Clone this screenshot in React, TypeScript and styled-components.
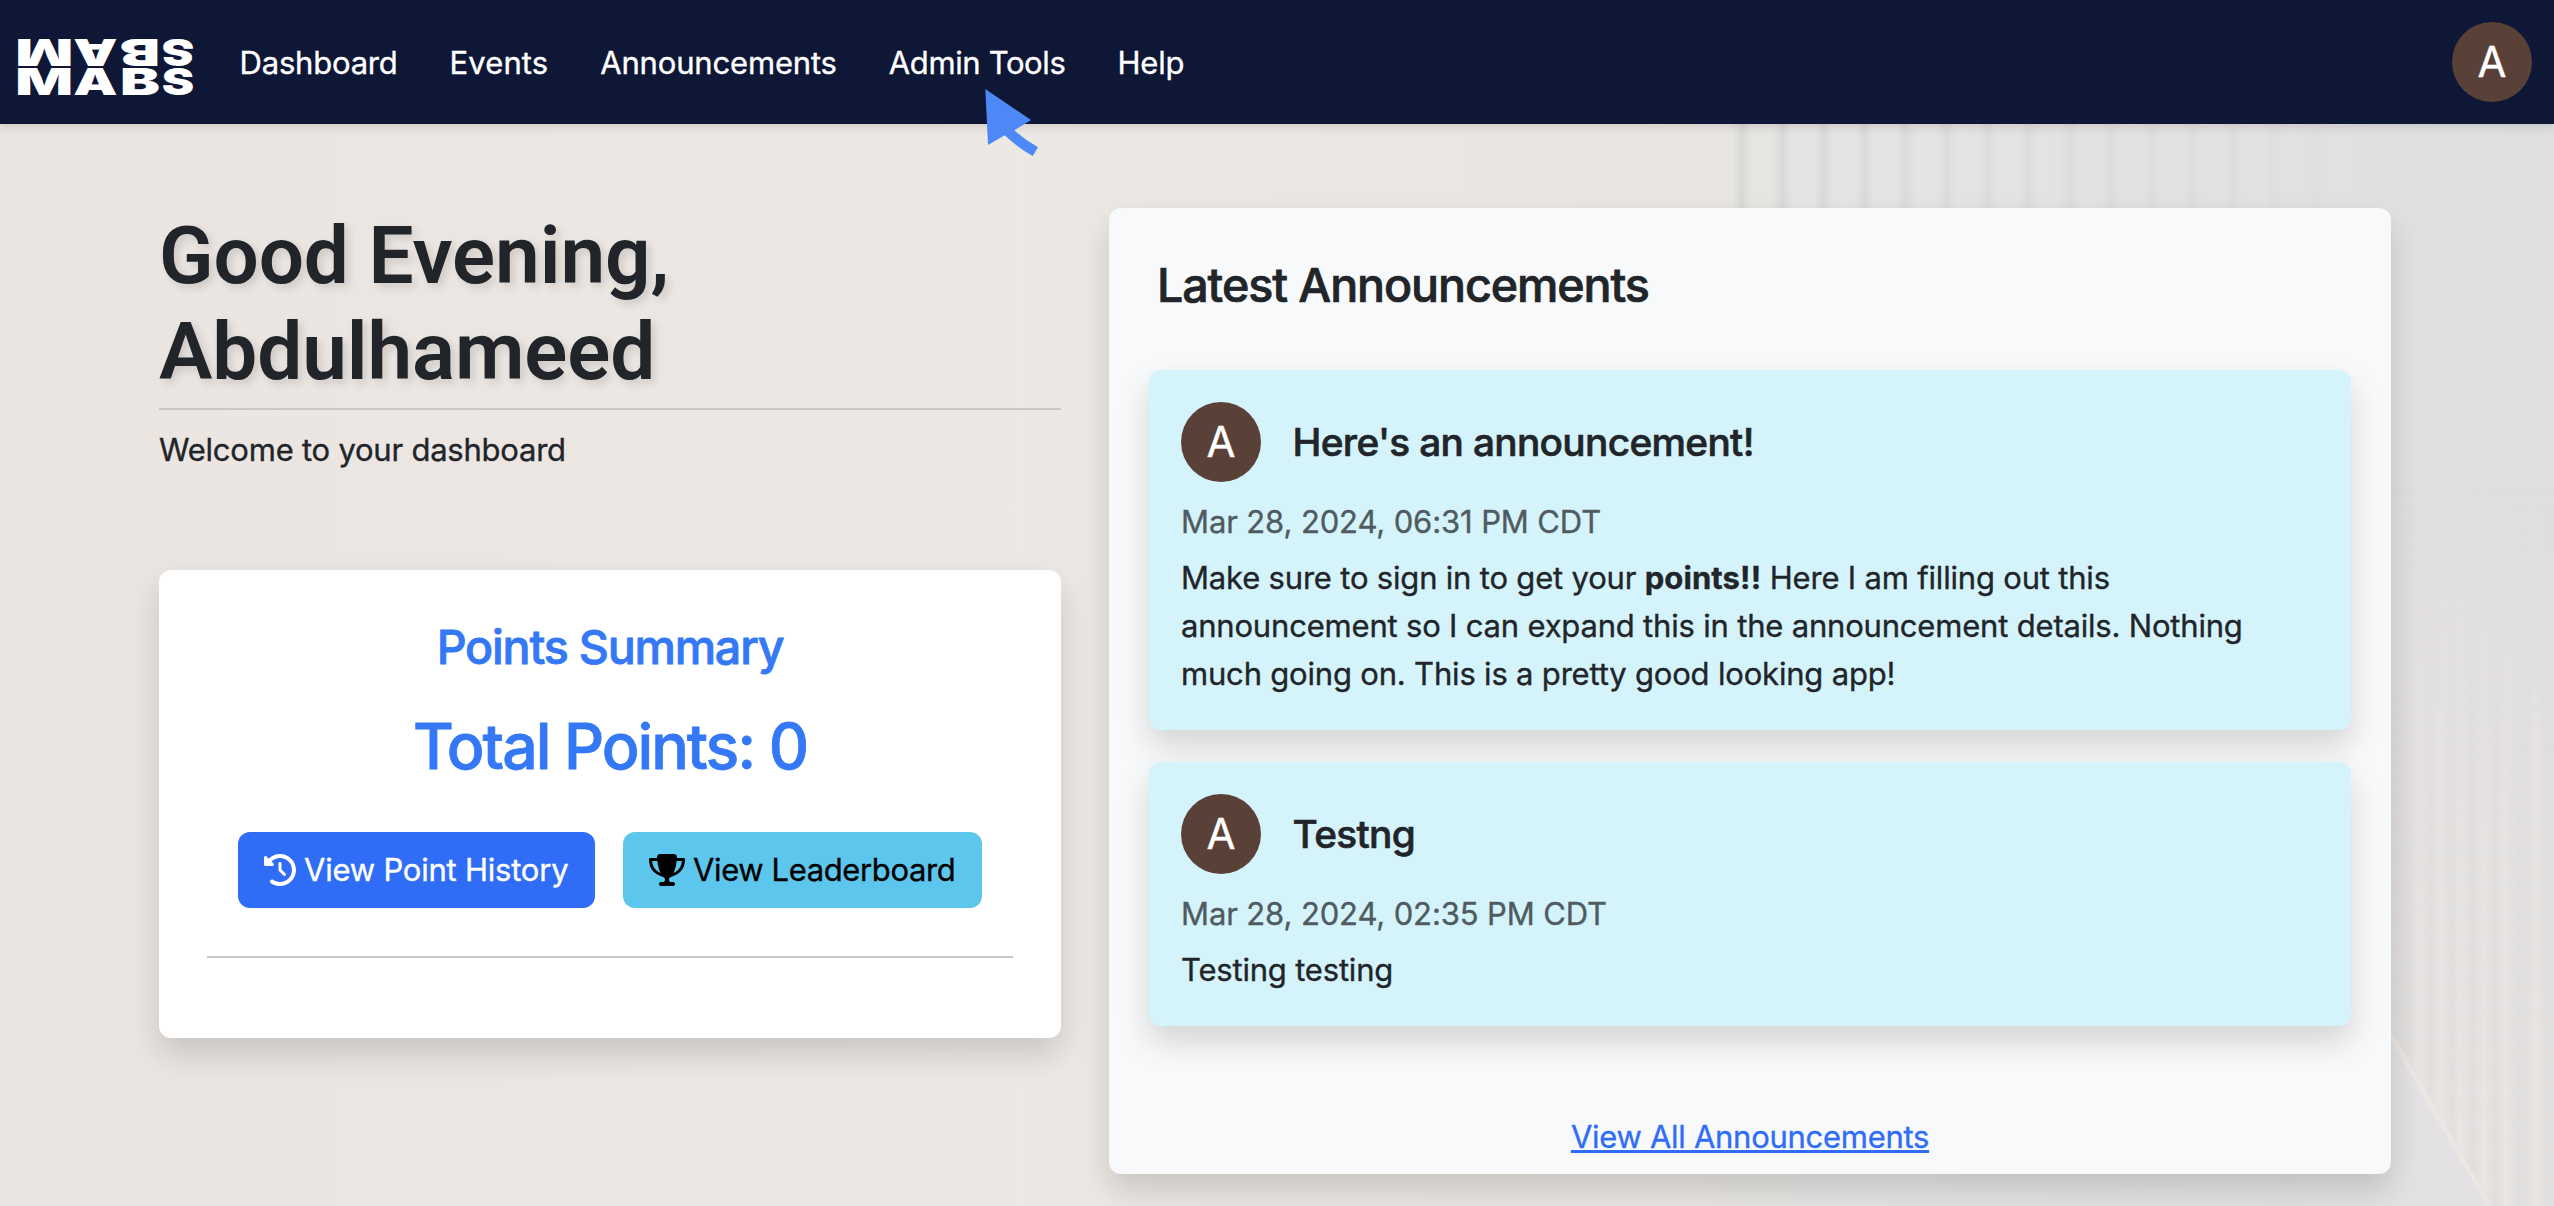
import React from "react";
import styled, { createGlobalStyle } from "styled-components";
import { FaClockRotateLeft, FaTrophy } from "react-icons/fa6";

const GlobalStyle = createGlobalStyle`
  *, *::before, *::after { box-sizing: border-box; }
  body {
    margin: 0;
    background: #ebe6e2;
    color: #212529;
    font-family: Inter, "Liberation Sans", sans-serif;
    font-size: 31px;
    line-height: 48px;
    -webkit-text-stroke: 0.35px currentColor;
  }
`;

const Page = styled.div`
  position: relative;
  isolation: isolate;
  height: 1206px;
  overflow: hidden;
`;

const BackdropSvg = styled.svg`
  position: absolute;
  inset: 0;
  z-index: -1;
`;

const Navbar = styled.header`
  display: flex;
  align-items: center;
  height: 124px;
  padding: 0 22px 0 18px;
  background: #0e1736;
  box-shadow: 0 4px 8px rgba(0, 0, 0, 0.1);
`;

const NavLinks = styled.nav`
  display: flex;
  gap: 52px;
  margin-left: 44.5px;
  padding-top: 1px;
  flex: 1;
`;

const NavLink = styled.a<{ $tracking?: number }>`
  color: #fff;
  letter-spacing: ${(p) => p.$tracking ?? 0}px;
  white-space: nowrap;
`;

const Avatar = styled.div`
  display: flex;
  align-items: center;
  justify-content: center;
  flex: none;
  width: 80px;
  height: 80px;
  border-radius: 50%;
  background: #5a4138;
  color: #fff;
  font-size: 42px;
`;

const Main = styled.main`
  display: grid;
  grid-template-columns: 902px 1282px;
  gap: 48px;
  align-items: start;
  padding: 84px 0 0 159px;
`;

const Greeting = styled.h1`
  margin: 0 0 8px;
  font-family: Roboto, sans-serif;
  font-size: 80px;
  font-weight: 600;
  line-height: 96px;
  letter-spacing: -0.08px;
  text-shadow: 4px 4px 8px rgba(0, 0, 0, 0.13);
  -webkit-text-stroke: 0;
`;

const Rule = styled.hr<{ $gap: number }>`
  height: 2px;
  margin: 0 0 ${(p) => p.$gap}px;
  border: 0;
  background: #c8c8c9;
`;

const Welcome = styled.p`
  margin: 0 0 96px;
  letter-spacing: -0.23px;
`;

const softShadow = "0 16px 32px rgba(0, 0, 0, 0.15)";

const PointsCard = styled.section`
  padding: 48px 48px 0;
  height: 468px;
  border-radius: 12px;
  background: #fff;
  box-shadow: ${softShadow};
  text-align: center;
`;

const PointsTitle = styled.h3`
  margin: 0 0 32px;
  color: #3478f6;
  font-size: 46.6px;
  font-weight: 500;
  line-height: 58px;
  letter-spacing: -1.2px;
  -webkit-text-stroke-width: 0.8px;
`;

const PointsTotal = styled.h2`
  margin: 0 0 47px;
  color: #3478f6;
  font-size: 62.6px;
  font-weight: 500;
  line-height: 77px;
  letter-spacing: -2.05px;
  -webkit-text-stroke-width: 0.8px;
`;

const ButtonRow = styled.div`
  display: flex;
  justify-content: center;
  gap: 28px;
  margin-bottom: 48px;
`;

const Button = styled.a<{ $bg: string; $fg: string; $width: number; $gap: number; $tracking: number }>`
  display: flex;
  align-items: center;
  gap: ${(p) => p.$gap}px;
  width: ${(p) => p.$width}px;
  height: 76px;
  padding: 0 26px;
  border-radius: 12px;
  background: ${(p) => p.$bg};
  color: ${(p) => p.$fg};
  letter-spacing: ${(p) => p.$tracking}px;
  white-space: nowrap;
`;

const HistoryIcon = styled(FaClockRotateLeft)`
  flex: none;
  width: 32px;
  height: 32px;
`;

const TrophyIcon = styled(FaTrophy)`
  flex: none;
  width: 36px;
  height: 32px;
`;

const Panel = styled.section`
  display: flex;
  flex-direction: column;
  height: 966px;
  padding: 48px 40px 13px;
  border-radius: 12px;
  background: #f8f9fb;
  box-shadow: ${softShadow};
`;

const PanelTitle = styled.h3`
  margin: 0 8px 56px;
  font-size: 46.6px;
  font-weight: 500;
  line-height: 58px;
  letter-spacing: -1.1px;
  -webkit-text-stroke-width: 0.7px;
`;

const Stack = styled.div`
  display: grid;
  gap: 32px;
`;

const Announcement = styled.article`
  padding: 32px;
  border-radius: 12px;
  background: #d5f3fb;
  box-shadow: ${softShadow};
`;

const AnnouncementHead = styled.div`
  display: flex;
  align-items: center;
  gap: 31.5px;
  margin-bottom: 16px;
`;

const AnnouncementTitle = styled.h4`
  margin: 0;
  font-size: 38.8px;
  font-weight: 500;
  letter-spacing: -0.67px;
  -webkit-text-stroke-width: 0.6px;
`;

const AnnouncementDate = styled.div`
  margin-bottom: 8px;
  color: #4f5b60;
  letter-spacing: -0.12px;
`;

const AnnouncementBody = styled.p`
  margin: 0;
  letter-spacing: -0.19px;

  b { letter-spacing: 0.1px; }
`;

const AllLink = styled.a`
  align-self: center;
  margin-top: auto;
  color: #306df6;
  letter-spacing: -0.28px;
  text-decoration: underline;
  text-decoration-thickness: 3px;
  text-underline-offset: 2px;
`;

const LogoSvg = styled.svg`
  flex: none;
  overflow: visible;
  -webkit-text-stroke: 0;
`;

const CursorSvg = styled.svg`
  position: absolute;
  left: 985px;
  top: 89px;
`;

type LogoLetter = { ch: string; center: number; stretch: number };

const logoLetters: LogoLetter[] = [
  { ch: "M", center: 26.2, stretch: 1.62 },
  { ch: "A", center: 77.3, stretch: 1.49 },
  { ch: "B", center: 122, stretch: 1.6 },
  { ch: "S", center: 160, stretch: 1.3 },
];

function Logo() {
  return (
    <LogoSvg
      width={177}
      height={56}
      viewBox="0 0 177 56"
      fill="#fff"
      fontFamily="Inter, sans-serif"
      fontWeight={900}
      fontSize={37.4}
      textAnchor="middle"
    >
      {logoLetters.map((l) => (
        <g key={l.ch}>
          <text transform={`translate(${l.center} 60.5) scale(${l.stretch} 1)`}>{l.ch}</text>
          <text transform={`translate(${l.center} 5) rotate(180) scale(${l.stretch} 1)`}>{l.ch}</text>
        </g>
      ))}
    </LogoSvg>
  );
}

const upperFolds = Array.from({ length: 15 }, (_, i) => ({
  x: 1742 + i * 41,
  opacity: Math.max(0.2, 1 - i * 0.05),
}));

const lowerFolds = [2419, 2441, 2461, 2484, 2506, 2536];

function Backdrop() {
  return (
    <BackdropSvg width={2554} height={1206} viewBox="0 0 2554 1206">
      <defs>
        <linearGradient id="wall" x1="0" x2="1" y1="0" y2="0">
          <stop offset="0" stopColor="#ebe5e1" />
          <stop offset="0.4" stopColor="#ece8e3" />
          <stop offset="0.66" stopColor="#e9e6e2" />
          <stop offset="0.7" stopColor="#e6e5e3" />
          <stop offset="0.8" stopColor="#e5e3e1" />
          <stop offset="0.88" stopColor="#e3e1e1" />
          <stop offset="1" stopColor="#e0dfdf" />
        </linearGradient>
        <linearGradient id="fold" x1="0" x2="1" y1="0" y2="0">
          <stop offset="0" stopColor="#dad8d6" stopOpacity="0" />
          <stop offset="0.5" stopColor="#dad8d6" />
          <stop offset="0.75" stopColor="#dad8d6" stopOpacity="0.4" />
          <stop offset="1" stopColor="#dad8d6" stopOpacity="0" />
        </linearGradient>
        <linearGradient id="sheen" x1="0" x2="1" y1="0" y2="0">
          <stop offset="0" stopColor="#e9e6e4" stopOpacity="0" />
          <stop offset="0.5" stopColor="#e9e6e4" />
          <stop offset="1" stopColor="#e9e6e4" stopOpacity="0" />
        </linearGradient>
        <linearGradient id="rise" x1="0" x2="0" y1="0" y2="1">
          <stop offset="0" stopColor="#fff" stopOpacity="0" />
          <stop offset="0.45" stopColor="#fff" stopOpacity="0.6" />
          <stop offset="1" stopColor="#fff" />
        </linearGradient>
        <mask id="riseMask">
          <rect x="2380" y="480" width="174" height="726" fill="url(#rise)" />
        </mask>
      </defs>
      <rect width="2554" height="1206" fill="url(#wall)" />
      {upperFolds.map((f) => (
        <rect key={f.x} x={f.x - 10} y="124" width="20" height="600" fill="url(#fold)" opacity={f.opacity} />
      ))}
      <g mask="url(#riseMask)">
        <rect x="2380" y="480" width="174" height="726" fill="#e1dfdd" />
        {lowerFolds.map((x) => (
          <rect key={x} x={x - 10} y="480" width="20" height="726" fill="url(#sheen)" />
        ))}
      </g>
      <path d="M2300 900 L2391 1034 L2490 1206 L2300 1206 Z" fill="#e3e1e3" />
      <path d="M2385 1025 L2491 1209" stroke="#e9e6e4" strokeWidth="5" fill="none" />
    </BackdropSvg>
  );
}

export default function App() {
  return (
    <>
      <GlobalStyle />
      <Page>
        <Backdrop />
        <Navbar>
          <Logo />
          <NavLinks>
            <NavLink $tracking={-0.2}>Dashboard</NavLink>
            <NavLink $tracking={0.1}>Events</NavLink>
            <NavLink $tracking={-0.17}>Announcements</NavLink>
            <NavLink $tracking={-0.37}>Admin Tools</NavLink>
            <NavLink $tracking={-0.2}>Help</NavLink>
          </NavLinks>
          <Avatar>A</Avatar>
        </Navbar>
        <Main>
          <div>
            <Greeting>
              Good Evening,
              <br />
              Abdulhameed
            </Greeting>
            <Rule $gap={16} />
            <Welcome>Welcome to your dashboard</Welcome>
            <PointsCard>
              <PointsTitle>Points Summary</PointsTitle>
              <PointsTotal>Total Points: 0</PointsTotal>
              <ButtonRow>
                <Button $bg="#306df6" $fg="#fff" $width={357} $gap={8} $tracking={-0.22}>
                  <HistoryIcon />
                  View Point History
                </Button>
                <Button $bg="#5dc6ec" $fg="#000" $width={359} $gap={8} $tracking={-0.38}>
                  <TrophyIcon />
                  View Leaderboard
                </Button>
              </ButtonRow>
              <Rule $gap={0} />
            </PointsCard>
          </div>
          <Panel>
            <PanelTitle>Latest Announcements</PanelTitle>
            <Stack>
              <Announcement>
                <AnnouncementHead>
                  <Avatar>A</Avatar>
                  <AnnouncementTitle>Here's an announcement!</AnnouncementTitle>
                </AnnouncementHead>
                <AnnouncementDate>Mar 28, 2024, 06:31 PM CDT</AnnouncementDate>
                <AnnouncementBody>
                  Make sure to sign in to get your <b>points!!</b> Here I am filling out this
                  announcement so I can expand this in the announcement details. Nothing
                  much going on. This is a pretty good looking app!
                </AnnouncementBody>
              </Announcement>
              <Announcement>
                <AnnouncementHead>
                  <Avatar>A</Avatar>
                  <AnnouncementTitle>Testng</AnnouncementTitle>
                </AnnouncementHead>
                <AnnouncementDate>Mar 28, 2024, 02:35 PM CDT</AnnouncementDate>
                <AnnouncementBody>Testing testing</AnnouncementBody>
              </Announcement>
            </Stack>
            <AllLink>View All Announcements</AllLink>
          </Panel>
        </Main>
        <CursorSvg width={54} height={68} viewBox="0 0 54 68" fill="#4e88f7">
          <path d="M0.3 0 L46 31 L29.3 41.3 Q40 51 53 58.3 L47.7 67 Q33 59 19.7 46.3 L3 56 Z" />
        </CursorSvg>
      </Page>
    </>
  );
}
